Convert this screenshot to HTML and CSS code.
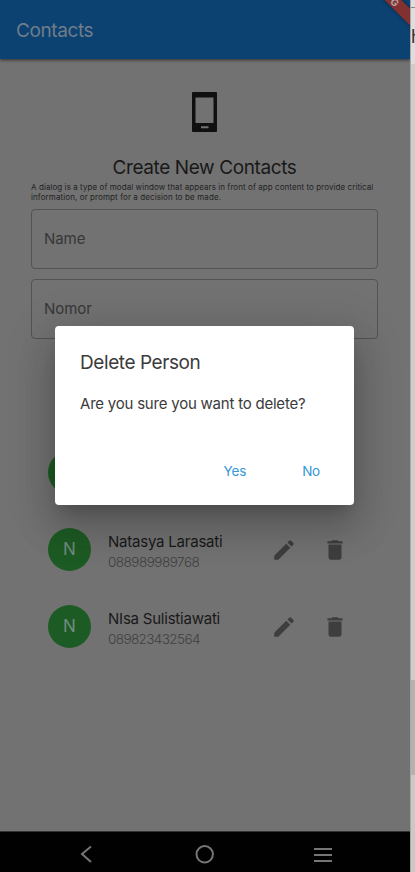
FILE: index.html
```html
<!DOCTYPE html>
<html lang="en">
<head>
<meta charset="utf-8">
<title>Contacts</title>
<link rel="stylesheet" href="styles.css">
</head>
<body>
<svg class="defs" width="0" height="0" aria-hidden="true">
  <symbol id="edit" viewBox="0 0 24 24"><path d="M3 17.25V21h3.75L17.81 9.94l-3.75-3.75L3 17.25zM20.71 7.04a1 1 0 0 0 0-1.41l-2.34-2.34a1 1 0 0 0-1.41 0l-1.83 1.83 3.75 3.75 1.83-1.83z"/></symbol>
  <symbol id="trash" viewBox="0 0 24 24"><path d="M6 19c0 1.1.9 2 2 2h8c1.100 0 2-.9 2-2V7H6v12zM19 4h-3.500l-1-1h-5l-1 1H5v2h14V4z"/></symbol>
</svg>
<div class="screen">
  <div class="phone">
    <header class="appbar"><h1>Contacts</h1><div class="ribbon">G</div></header>
    <main class="content">
      <svg class="device" width="25" height="40" viewBox="0 0 25 40"><path fill-rule="evenodd" d="M1 0h23q1 0 1 1v38q0 1-1 1H1q-1 0-1-1V1q0-1 1-1zM3.500 5.500V31h18V5.500zM9 34.200v2h7.500v-2z"/></svg>
      <h2>Create New Contacts</h2>
      <p class="note">A dialog is a type of modal window that appears in front of app content to provide critical<br><span class="second">information, or prompt for a decision to be made.</span></p>
      <div class="field">Name</div>
      <div class="field">Nomor</div>
      <ul class="list">
        <li class="row"><div class="avatar">N</div></li>
        <li class="row"><div class="avatar">N</div><div class="who"><b>Natasya Larasati</b><small>088989989768</small></div><svg class="icon"><use href="#edit"/></svg><svg class="icon"><use href="#trash"/></svg></li>
        <li class="row"><div class="avatar">N</div><div class="who"><b>NIsa Sulistiawati</b><small class="wide">089823432564</small></div><svg class="icon"><use href="#edit"/></svg><svg class="icon"><use href="#trash"/></svg></li>
      </ul>
    </main>
    <nav class="navbar">
      <svg width="410" height="41" viewBox="0 0 410 41" fill="none" stroke="#767676" stroke-width="2"><path d="M91 15.500L82 23l9 8"/><circle cx="204.700" cy="23.300" r="8.200"/><path d="M314 18h18M314 24h18M314 30h18" stroke-width="2.200"/></svg>
    </nav>
    <section class="dialog" role="dialog">
      <h3>Delete Person</h3>
      <p>Are you sure you want to delete?</p>
      <div class="actions"><button>Yes</button><button>No</button></div>
    </section>
  </div>
  <aside class="edge"><div class="tab"></div><div class="peek">th</div><div class="track"></div><div class="thumb"></div><div class="rest"></div></aside>
</div>
</body>
</html>
```

FILE: styles.css
```css
* { box-sizing: border-box; }
body { margin: 0; font-family: Inter, sans-serif; color: #191919; }
.defs { position: absolute; }
.screen { display: flex; width: 415px; height: 872px; overflow: hidden; }
.phone { position: relative; width: 410px; height: 872px; display: flex; flex-direction: column; background: #727272; overflow: hidden; flex: none; }
h1, h2, h3, p, ul { margin: 0; padding: 0; font-weight: 400; }
.appbar { position: relative; height: 59px; flex: none; padding: 18px 16px; background: #0b4272; box-shadow: 0 1px 3px rgba(0,0,0,.6); overflow: hidden; }
h1 { font-size: 19px; line-height: 25px; letter-spacing: -.4px; color: #707d88; }
.ribbon { position: absolute; left: 355px; top: -4px; width: 80px; height: 12px; background: #833030; transform: rotate(45deg); box-shadow: 0 0 4px rgba(0,0,0,.5); color: #b5a5a5; font-size: 10px; line-height: 12px; font-weight: 700; text-align: center; }
.content { flex: 1; padding: 33px 32px 0 31px; display: flex; flex-direction: column; }
.device { align-self: center; fill: #101010; }
h2 { margin-top: 23px; height: 25px; line-height: 25px; font-size: 19px; letter-spacing: -.39px; text-align: center; white-space: nowrap; }
.note { margin-top: 2px; height: 20px; font-size: 8px; line-height: 10px; white-space: nowrap; letter-spacing: .07px; color: #222; }
.second { letter-spacing: .1px; }
.field { height: 60px; flex: none; margin-top: 7px; padding: 0 12px; border: 1.500px solid #535353; border-radius: 4px; font-size: 15px; line-height: 57px; color: #373737; letter-spacing: -.05px; }
.field + .field { margin-top: 10px; }
.list { list-style: none; margin-top: 95px; padding-left: 17px; }
.row { display: flex; align-items: center; height: 77px; }
.avatar { width: 43px; height: 43px; border-radius: 50%; background: #1d5b24; color: #728a80; font-size: 17px; line-height: 43px; text-align: center; flex: none; }
.who { width: 163px; margin-left: 17px; display: flex; flex-direction: column; padding-top: 4px; }
b { font-weight: 400; font-size: 15px; line-height: 21px; letter-spacing: -.22px; white-space: nowrap; }
small { font-size: 13.500px; line-height: 21px; color: #404040; font-weight: 300; letter-spacing: -.5px; }
.wide { letter-spacing: -.6px; }
.icon { width: 26px; height: 26px; fill: #3e3e3e; flex: none; }
.icon + .icon { margin-left: 25px; }
.navbar { height: 41px; flex: none; background: #010101; border-top: 1px solid #333; }
.navbar svg { display: block; margin-top: -1px; }
.dialog { position: absolute; left: 55px; top: 326px; width: 299px; height: 179px; padding: 25px 25px; background: #fff; border-radius: 4px; box-shadow: 0 11px 15px -7px rgba(0,0,0,.2), 0 24px 38px 3px rgba(0,0,0,.14), 0 9px 46px 8px rgba(0,0,0,.12); color: #3b3b3b; }
h3 { font-size: 19px; line-height: 24px; letter-spacing: -.42px; white-space: nowrap; }
.dialog p { margin-top: 18px; font-size: 15px; line-height: 22px; letter-spacing: -.22px; white-space: nowrap; }
.actions { display: flex; justify-content: flex-end; gap: 56px; margin-top: 46px; padding-right: 9px; }
button { border: 0; padding: 0; background: none; font: 13.500px/20px Inter, sans-serif; letter-spacing: -.2px; color: #3597d8; }
.edge { width: 5px; height: 872px; display: flex; flex-direction: column; background: #dedede; border-left: 1px solid #aaa; overflow: hidden; }
.tab { height: 8px; flex: none; border-bottom: 1px solid #888; }
.peek { height: 56px; flex: none; font-size: 18px; line-height: 58px; width: 20px; margin-left: -6px; color: #333; }
.track { height: 616px; flex: none; background: #cecec8; }
.thumb { height: 95px; flex: none; background: #b2b3ab; }
.rest { flex: 1; background: #c9c9c7; }
```
